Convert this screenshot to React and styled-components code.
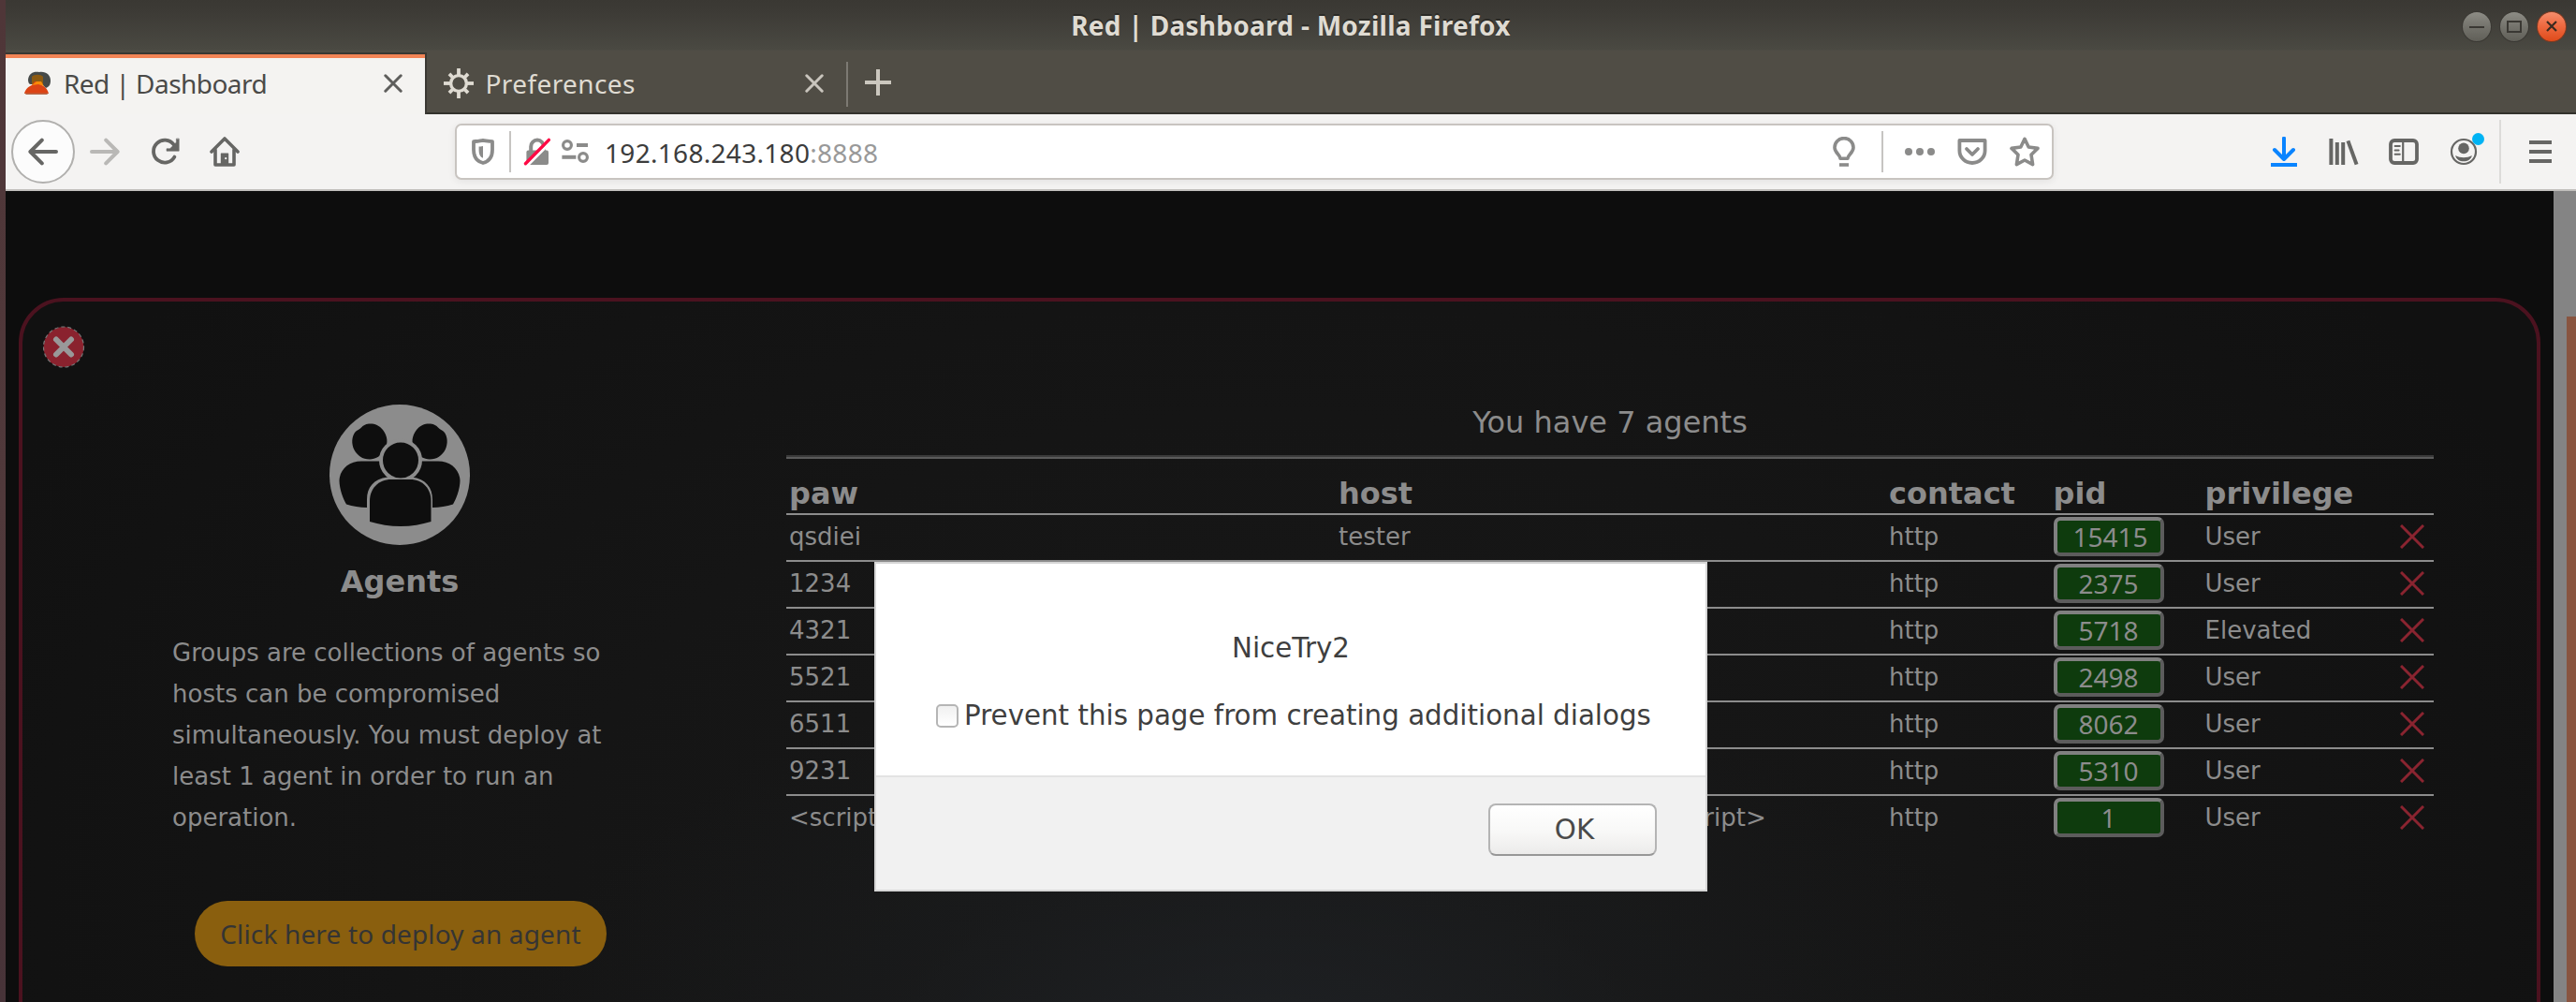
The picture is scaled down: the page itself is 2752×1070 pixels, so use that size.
import React from 'react';
import styled, { createGlobalStyle, css } from 'styled-components';

const GlobalStyle = createGlobalStyle`
  * { box-sizing: border-box; }
  html, body { margin: 0; padding: 0; background: #0d0d0d; overflow: hidden; }
  svg { display: block; flex: none; }
`;

const chromeFont = css`font-family: "Noto Sans", "Open Sans", sans-serif;`;
const pageFont = css`font-family: "DejaVu Sans", Verdana, sans-serif;`;

const Desktop = styled.div`
  display: flex;
  width: 2752px;
  height: 1070px;
  padding-left: 6px;
  background: linear-gradient(#4f3638, #50393b 50%, #473338);
  position: relative;
  overflow: hidden;
`;
const Window = styled.div`
  flex: 1;
  display: flex;
  flex-direction: column;
  min-width: 0;
`;

/* Title bar */
const TitleBar = styled.header`
  ${chromeFont}
  display: grid;
  grid-template-columns: 1fr auto 1fr;
  align-items: center;
  height: 54px;
  padding: 0 10px 0 0;
  background: linear-gradient(#3a3833, #3d3b36 25%, #4a4942 98%, #504d45);
`;
const WindowTitle = styled.h1`
  grid-column: 2;
  margin: 0 -10px 0 0;
  font-size: 28px;
  line-height: 38px;
  font-weight: 700;
  letter-spacing: 0.28px;
  color: #dfdbd2;
  text-shadow: 0 -2px 0 #2b2a26;
  white-space: nowrap;
`;
const WindowButtons = styled.div`
  display: flex;
  justify-content: flex-end;
  gap: 8px;
  padding-top: 2px;
`;
const WindowButton = styled.button`
  display: flex;
  align-items: center;
  justify-content: center;
  width: 32px;
  height: 33px;
  padding: 0;
  border: 1px solid ${p => (p.$close ? '#7b3a22' : '#3a3833')};
  border-radius: 50%;
  background: ${p => (p.$close
    ? 'linear-gradient(#f58d6c, #ee6b42 45%, #df4a1a)'
    : 'linear-gradient(#8d8c85, #74736c 50%, #605f58)')};
`;

/* Tabs */
const TabBar = styled.nav`
  ${chromeFont}
  display: flex;
  height: 68px;
  background: #504d45;
  box-shadow: inset 0 -2px 0 #33322c;
`;
const Tab = styled.div`
  display: flex;
  align-items: center;
  width: ${p => p.$width}px;
  height: 66px;
  margin-top: 2px;
  padding: 0 ${p => (p.$active ? 24 : 22)}px 0 18px;
  color: ${p => (p.$active ? '#4a4a48' : '#dfdbd2')};
  ${p => p.$active && css`
    background: #f4f3f1;
    border-right: 2px solid #3a3833;
    box-shadow: inset 0 2px 0 #3a3833, inset 0 6px 0 #f38456;
  `}
`;
const TabLabel = styled.span`
  flex: 1;
  margin-left: ${p => p.$gap}px;
  font-size: 28px;
  line-height: 38px;
  letter-spacing: ${p => p.$ls}px;
  white-space: nowrap;
`;
const TabDivider = styled.i`
  width: 2px;
  height: 48px;
  margin: 12px 16px 0 2px;
  background: #7d7a73;
`;
const NewTab = styled.div`
  margin-top: 18px;
`;

/* Toolbar */
const Toolbar = styled.div`
  ${chromeFont}
  display: flex;
  align-items: center;
  height: 82px;
  padding: 0 22px 0 6px;
  background: #f4f3f2;
  border-bottom: 2px solid #c1bfbc;
`;
const BackButton = styled.div`
  display: flex;
  align-items: center;
  justify-content: center;
  width: 68px;
  height: 68px;
  border: 2px solid #b1b0ae;
  border-radius: 50%;
  background: #fcfcfc;
`;
const NavButtons = styled.div`
  display: flex;
  gap: 32px;
  margin-left: 16px;
`;
const UrlBar = styled.div`
  display: flex;
  align-items: center;
  width: 1708px;
  height: 60px;
  margin-left: 230px;
  padding: 0 13px 0 12px;
  background: #fff;
  border: 2px solid #c8c4c0;
  border-radius: 7px;
  box-shadow: 0 2px 8px rgba(0, 0, 0, 0.07);
`;
const Separator = styled.i`
  width: 2px;
  height: ${p => p.$h}px;
  margin: 0 ${p => p.$right}px 0 ${p => p.$left}px;
  background: ${p => p.$color || '#c6c4c2'};
`;
const Address = styled.div`
  flex: 1;
  margin: 2px 0 0 16px;
  font-size: 28px;
  line-height: 38px;
  letter-spacing: 0.3px;
  color: #3c3c3c;
  span { color: #999; }
`;
const UrlGroup = styled.div`
  display: flex;
  gap: ${p => p.$gap}px;
`;
const ToolbarActions = styled.div`
  display: flex;
  align-items: center;
  gap: 32px;
  margin-left: 230px;
`;

/* Page */
const Viewport = styled.main`
  flex: 1;
  display: flex;
  min-height: 0;
  background: #0d0d0d;
`;
const Page = styled.div`
  ${pageFont}
  flex: 1;
  padding: 114px 14px 0;
  overflow: hidden;
  color: #8c8c8c;
`;
const ScrollTrack = styled.div`
  display: flex;
  justify-content: flex-end;
  width: 24px;
  padding-top: 134px;
  background: #848484;
`;
const ScrollThumb = styled.div`
  width: 10px;
  background: #895540;
`;
const Panel = styled.section`
  height: 900px;
  padding: 26px 110px 0 22px;
  border: 4px solid #4b121f;
  border-radius: 48px;
  background:
    radial-gradient(ellipse 800px 420px at 1330px 800px, rgba(32, 35, 39, 0.8), rgba(28, 30, 32, 0.45) 50%, rgba(24, 24, 25, 0) 100%),
    radial-gradient(ellipse 1500px 1000px at 1330px 620px, #181818, #151515 50%, #111 100%);
`;
const PanelBody = styled.div`
  display: flex;
  align-items: flex-start;
  margin-top: 38px;
  padding-left: 138px;
`;
const Intro = styled.aside`
  display: flex;
  flex-direction: column;
  align-items: center;
  width: 486px;
  margin-right: 170px;
`;
const IntroTitle = styled.h2`
  margin: 17px 0 0;
  font-size: 32px;
  line-height: 44px;
  font-weight: 700;
`;
const IntroText = styled.p`
  width: 100%;
  margin: 32px 0 0;
  font-size: 26px;
  line-height: 44px;
`;
const DeployButton = styled.button`
  ${chromeFont}
  width: 440px;
  height: 70px;
  margin: 67px 0 0 2px;
  padding: 0;
  border: 0;
  border-radius: 35px;
  background: #8a5f0e;
  color: #343434;
  font-size: 28px;
  letter-spacing: 0.15px;
`;

const Agents = styled.div`
  width: 1760px;
`;
const AgentCount = styled.p`
  margin: 0;
  font-size: 32px;
  line-height: 38px;
  text-align: center;
`;
const Rule = styled.hr`
  height: 4px;
  margin: 16px 0;
  border: 0;
  border-top: 2px solid #3a3a3a;
  border-bottom: 2px solid #5a5a5a;
`;
const Row = styled.div`
  display: grid;
  grid-template-columns: 587px 588px 175.5px 162px 208.5px 1fr;
  align-items: center;
  height: ${p => (p.$head ? 44 : 50)}px;
  padding: 0 0 ${p => (p.$head ? 0 : 2)}px 3px;
  border-bottom: 2px solid #8c8c8c;
  font-size: ${p => (p.$head ? 32 : 26)}px;
  font-weight: ${p => (p.$head ? 700 : 400)};
  line-height: 38px;
  white-space: nowrap;
  &:last-child { border-bottom-color: transparent; }
`;
const Pid = styled.button`
  ${chromeFont}
  width: 118px;
  height: 42px;
  padding: 0 17px;
  border: 4px solid;
  border-color: #808080 #5c5c5c #5c5c5c #808080;
  border-radius: 7px;
  background: #0e3b0d;
  color: #8c8c8c;
  font-size: 28px;
  line-height: 34px;
  text-align: center;
  white-space: nowrap;
`;

/* Dialog */
const Dialog = styled.div`
  ${pageFont}
  position: absolute;
  left: 934px;
  top: 600px;
  display: flex;
  flex-direction: column;
  width: 890px;
  height: 352px;
  border: 2px solid #d6d6d6;
  background: #fff;
  color: #3f3f3f;
  font-size: 29.33px;
  line-height: 38px;
`;
const DialogBody = styled.div`
  flex: 1;
  padding: 71px 0 0 64px;
`;
const DialogMessage = styled.p`
  margin: 0 64px 34px 0;
  text-align: center;
`;
const CheckLabel = styled.label`
  display: flex;
  align-items: center;
  gap: 6px;
  white-space: nowrap;
`;
const CheckBox = styled.span`
  width: 24px;
  height: 25px;
  border: 2px solid #b5b5b5;
  border-radius: 5px;
  background: linear-gradient(#f0f0f0, #fff);
`;
const DialogFooter = styled.div`
  display: flex;
  justify-content: flex-end;
  height: 122px;
  padding: 28px 52px 0 0;
  border-top: 2px solid #e3e3e3;
  background: #f1f1f1;
`;
const OkButton = styled.button`
  ${pageFont}
  width: 180px;
  height: 56px;
  padding: 0 0 0 4px;
  border: 2px solid #b4b4b4;
  border-bottom-color: #979797;
  border-radius: 8px;
  background: linear-gradient(#fff, #f8f8f7 55%, #ecebea);
  color: #4a4a4a;
  font-size: 29.33px;
`;

/* Icons, drawn on a 16-unit grid */
const Icon = ({ size = 32, color = '#666664', w = 2, fill = 'none', children }) => (
  <svg width={size} height={size} viewBox="0 0 16 16" fill={fill} stroke={color} strokeWidth={w}
    strokeLinecap="round" strokeLinejoin="round">{children}</svg>
);
const Cross = ({ color }) => (
  <svg width="20" height="20" viewBox="0 0 10 10" stroke={color} strokeWidth="1.5" strokeLinecap="round">
    <path d="M.9 .9l8.2 8.2M9.1 .9L.9 9.1" />
  </svg>
);
const Favicon = () => (
  <svg width="32" height="32" viewBox="0 0 32 32">
    <path d="M6 12C7 5 12 3 18 4c7-1 12 3 12 9 0 5-2 7-5 8l-4-4H9c-2 0-3-2-3-5z" fill="#464a49" />
    <path d="M10 9c2-3 10-3 12 0v8H10z" fill="#8c5a12" />
    <path d="M2 27c1-5 5-8 8-9l3-4h6l2 4c4 2 6 5 7 9z" fill="#dc4415" />
    <path d="M10 18l5-4h5l3 5-6-2z" fill="#f98a08" />
    <path d="M2 26.500h26l-2 1.500H4z" fill="#b5694a" />
  </svg>
);
const Gear = () => (
  <Icon color="#dfdbd2" w={1.7}>
    <circle cx="8" cy="8" r="4.2" />
    <g strokeLinecap="butt" strokeWidth="1.9">
      {[0, 45, 90, 135, 180, 225, 270, 315].map(a => (
        <path key={a} d={a % 90 ? 'M8 3.6V.9' : 'M8 3.6V0'} transform={`rotate(${a} 8 8)`} />
      ))}
    </g>
  </Icon>
);
const Reload = () => (
  <Icon w={1.9}>
    <path d="M13.200 10.800A6 6 0 1 1 12.800 4.200" />
    <path d="M15.600 1.200V7.600H9V6.400H10.800L14.200 3V1.200z" fill="#666664" strokeWidth=".3" />
  </Icon>
);
const Home = () => (
  <Icon w={1.8}>
    <path d="M1 8L8 1l7 7" />
    <path d="M3 7v8h10V7" />
    <path d="M6.2 15V9h3.6v6z" fill="#666664" strokeWidth=".6" />
    <circle cx="8.6" cy="11.6" r=".55" fill="#f4f3f2" stroke="none" />
  </Icon>
);
const Shield = () => (
  <Icon color="#8b8b8a" w={1.9}>
    <path d="M8 1.9C6 2.2 4.4 2.5 3 2.6V7c0 4 1.8 6.2 5 7 3.2-.8 5-3 5-7V2.6C11.600 2.500 10 2.200 8 1.900z" />
    <path d="M8 5C7 5.200 6.400 5.300 5.800 5.300V7.500c0 2 .8 3.300 2.200 3.900z" fill="#8b8b8a" stroke="none" />
  </Icon>
);
const BrokenLock = () => (
  <Icon color="#8b8b8a">
    <path d="M4.600 7.500V5.200a3.400 3.400 0 0 1 6.800 0V7.500" />
    <rect x="2.200" y="7.200" width="11.800" height="7.800" rx="1" fill="#8b8b8a" stroke="none" />
    <path d="M2.800 15.200L15.400 2.600" stroke="#fff" strokeWidth="1.500" />
    <path d="M1.700 14.400L14.200 1.700" stroke="#ff0a45" strokeWidth="1.700" />
  </Icon>
);
const Permissions = () => (
  <Icon color="#8b8b8a" w={1.600}>
    <circle cx="4" cy="4.500" r="2.200" /><path d="M9 4.500h6" strokeLinecap="butt" strokeWidth="2" />
    <circle cx="12.500" cy="11" r="2.200" /><path d="M1.200 10.900h7.500" strokeLinecap="butt" strokeWidth="2" />
  </Icon>
);
const Bulb = () => (
  <Icon color="#8b8b8a" w={1.800}>
    <path d="M6 11.600C6 9.600 3 8.600 3 5.700a5 4.900 0 0 1 10 0C13 8.600 10 9.600 10 11.600z" />
    <path d="M5.500 15h5" strokeLinecap="butt" />
  </Icon>
);
const Dots = () => (
  <Icon color="none" fill="#8b8b8a">
    <circle cx="2" cy="8" r="2" /><circle cx="8" cy="8" r="2" /><circle cx="14" cy="8" r="2" />
  </Icon>
);
const Pocket = () => (
  <Icon color="#8b8b8a" w={1.900}>
    <path d="M1.200 2h13.600v5.500a6.800 6.500 0 0 1-13.600 0z" />
    <path d="M5 6.500l3 3 3-3" />
  </Icon>
);
const Star = () => (
  <Icon color="#8b8b8a" w={1.800}>
    <path d="M8 1.200l2.100 4.300 4.900.7-3.500 3.400.8 5.200L8 12.500l-4.300 2.300.8-5.200L1 6.200l4.900-.7z" />
  </Icon>
);
const Download = () => (
  <Icon color="#0a84ff">
    <path d="M8 .8V11.500M3 7l5 5 5-5" />
    <path d="M1 15h14" strokeLinecap="butt" />
  </Icon>
);
const Library = () => (
  <Icon w={2}>
    <g strokeLinecap="butt">
      <path d="M1.200 1v14M4.400 3v12M7.600 3v12" /><path d="M10.200 2.200l4.600 12.600" />
    </g>
  </Icon>
);
const Sidebar = () => (
  <Icon w={1.900}>
    <rect x="1" y="2" width="14" height="12" rx="2" />
    <path d="M7.600 2v12" strokeWidth="1.100" /><path d="M3.300 5h2.600M3.300 7.200h2M3.300 9.400h2.600" strokeWidth="1" />
  </Icon>
);
const AccountBox = styled.span`
  position: relative;
`;
const Badge = styled.i`
  position: absolute;
  top: -4px;
  right: -6px;
  width: 13px;
  height: 13px;
  border-radius: 50%;
  background: #00b3f4;
`;
const Account = () => (
  <AccountBox>
    <Icon w={1.100}>
      <circle cx="8" cy="8" r="6.500" />
      <circle cx="8" cy="6.200" r="2.900" fill="#666664" stroke="none" />
      <path d="M3.600 10c2.600 1.500 6.200 1.500 8.800 0-.6 4.200-8.200 4.200-8.800 0z" fill="#666664" stroke="none" />
    </Icon>
    <Badge />
  </AccountBox>
);
const Menu = () => (
  <Icon><path d="M2 3h12M2 8h12M2 13h12" strokeLinecap="butt" /></Icon>
);
const CloseBadge = () => (
  <svg width="46" height="46" viewBox="0 0 46 46">
    <circle cx="22" cy="22.500" r="21.500" fill="#8a222e" stroke="#777" strokeWidth="1.200" strokeDasharray="4 3" />
    <path d="M14 14.500l16 16M30 14.500L14 30.500" stroke="#999" strokeWidth="6" strokeLinecap="round" />
  </svg>
);
const AgentsIcon = () => (
  <svg width="150" height="150" viewBox="0 0 150 150" fill="#0e0e0e">
    <circle cx="75" cy="75" r="75" fill="#8c8c8c" />
    <path d="M42 20.500c5-.5 11 1 15 6.500 5 6.500 6 14 2 21-4 7-10 10.500-16 10.500-8 0-13-4-16.500-10-3.500-7-2.500-14 .5-18.500 2.500-3 4-2.500 7-5.500 2-2 4-3.500 8-4z" />
    <path d="M108 20.500c-5-.5-11 1-15 6.500-5 6.500-6 14-2 21 4 7 10 10.500 16 10.500 8 0 13-4 16.500-10 3.500-7 2.500-14-.5-18.500-2.500-3-4-2.500-7-5.500-2-2-4-3.500-8-4z" />
    <path d="M34 60.500h23l5 17c-15 2-22 11-22 24v8.500c-8 0-15-1.500-22-3.500-3-5-7.500-16-7.500-25.500C11 69 21 60.500 34 60.500z" />
    <path d="M116 60.500H93l-5 17c15 2 22 11 22 24v8.500c8 0 15-1.500 22-3.500 3-5 7.500-16 7.500-25.500C139 69 129 60.500 116 60.500z" />
    <circle cx="76" cy="59.500" r="21" stroke="#8c8c8c" strokeWidth="4" />
    <path d="M66 80h20c14 0 22.500 10 22.500 23v22c-10 3-21 5-32.500 5s-23-2-33-5v-22C43 90 52 80 66 80z" />
  </svg>
);
const Remove = () => (
  <svg width="26" height="26" viewBox="0 0 26 26" stroke="#8a2430" strokeWidth="3">
    <path d="M1 1l24 24M25 1L1 25" />
  </svg>
);

const payload = '<script>alert("NiceTry2")</script>';
const agents = [
  ['qsdiei', 'tester', '15415', 'User'],
  ['1234', '', '2375', 'User'],
  ['4321', '', '5718', 'Elevated'],
  ['5521', '', '2498', 'User'],
  ['6511', '', '8062', 'User'],
  ['9231', '', '5310', 'User'],
  [payload, payload, '1', 'User'],
];

export default function App() {
  return (
    <Desktop>
      <GlobalStyle />
      <Window>
        <TitleBar>
          <WindowTitle>Red | Dashboard - Mozilla Firefox</WindowTitle>
          <WindowButtons>
            <WindowButton><svg width="18" height="18"><path d="M1 10h16" stroke="#3a3833" strokeWidth="2" /></svg></WindowButton>
            <WindowButton><svg width="18" height="18"><rect x="2" y="4" width="14" height="11" fill="none" stroke="#3a3833" strokeWidth="2" /></svg></WindowButton>
            <WindowButton $close><svg width="18" height="18"><path d="M4 4l10 10M14 4L4 14" stroke="#3a2a20" strokeWidth="2.200" /></svg></WindowButton>
          </WindowButtons>
        </TitleBar>

        <TabBar>
          <Tab $active $width={450}>
            <Favicon />
            <TabLabel $gap={12} $ls={-0.55}>Red | Dashboard</TabLabel>
            <Cross color="#5e5e5c" />
          </Tab>
          <Tab $width={446}>
            <Gear />
            <TabLabel $gap={12.5} $ls={0.4}>Preferences</TabLabel>
            <Cross color="#c9c5bd" />
          </Tab>
          <TabDivider />
          <NewTab>
            <Icon color="#cbc7be" w={2}><path d="M8 1v14M1 8h14" strokeLinecap="butt" /></Icon>
          </NewTab>
        </TabBar>

        <Toolbar>
          <BackButton><Icon><path d="M15 8H1.500M7.400 1.800L1.200 8l6.200 6.200" /></Icon></BackButton>
          <NavButtons>
            <Icon color="#b9b8b6"><path d="M1 8h13.500M8.600 1.800L14.800 8l-6.200 6.200" /></Icon>
            <Reload />
            <Home />
          </NavButtons>
          <UrlBar>
            <Shield />
            <Separator $h={44} $left={12} $right={12} />
            <UrlGroup $gap={8}><BrokenLock /><Permissions /></UrlGroup>
            <Address>192.168.243.180<span>:8888</span></Address>
            <Bulb />
            <Separator $h={44} $left={24} $right={23} />
            <UrlGroup $gap={24}><Dots /><Pocket /><Star /></UrlGroup>
          </UrlBar>
          <ToolbarActions>
            <Download /><Library /><Sidebar /><Account />
          </ToolbarActions>
          <Separator $h={68} $left={22} $right={26} $color="#dcdbd9" />
          <Menu />
        </Toolbar>

        <Viewport>
          <Page>
            <Panel>
              <CloseBadge />
              <PanelBody>
                <Intro>
                  <AgentsIcon />
                  <IntroTitle>Agents</IntroTitle>
                  <IntroText>
                    Groups are collections of agents so hosts can be compromised simultaneously.
                    You must deploy at least 1 agent in order to run an operation.
                  </IntroText>
                  <DeployButton>Click here to deploy an agent</DeployButton>
                </Intro>
                <Agents>
                  <AgentCount>You have 7 agents</AgentCount>
                  <Rule />
                  <Row $head>
                    <span>paw</span><span>host</span><span>contact</span><span>pid</span><span>privilege</span>
                  </Row>
                  {agents.map(([paw, host, pid, privilege]) => (
                    <Row key={pid}>
                      <span>{paw}</span>
                      <span>{host}</span>
                      <span>http</span>
                      <Pid>{pid}</Pid>
                      <span>{privilege}</span>
                      <Remove />
                    </Row>
                  ))}
                </Agents>
              </PanelBody>
            </Panel>
          </Page>
          <ScrollTrack><ScrollThumb /></ScrollTrack>
        </Viewport>
      </Window>

      <Dialog>
        <DialogBody>
          <DialogMessage>NiceTry2</DialogMessage>
          <CheckLabel><CheckBox />Prevent this page from creating additional dialogs</CheckLabel>
        </DialogBody>
        <DialogFooter><OkButton>OK</OkButton></DialogFooter>
      </Dialog>
    </Desktop>
  );
}
